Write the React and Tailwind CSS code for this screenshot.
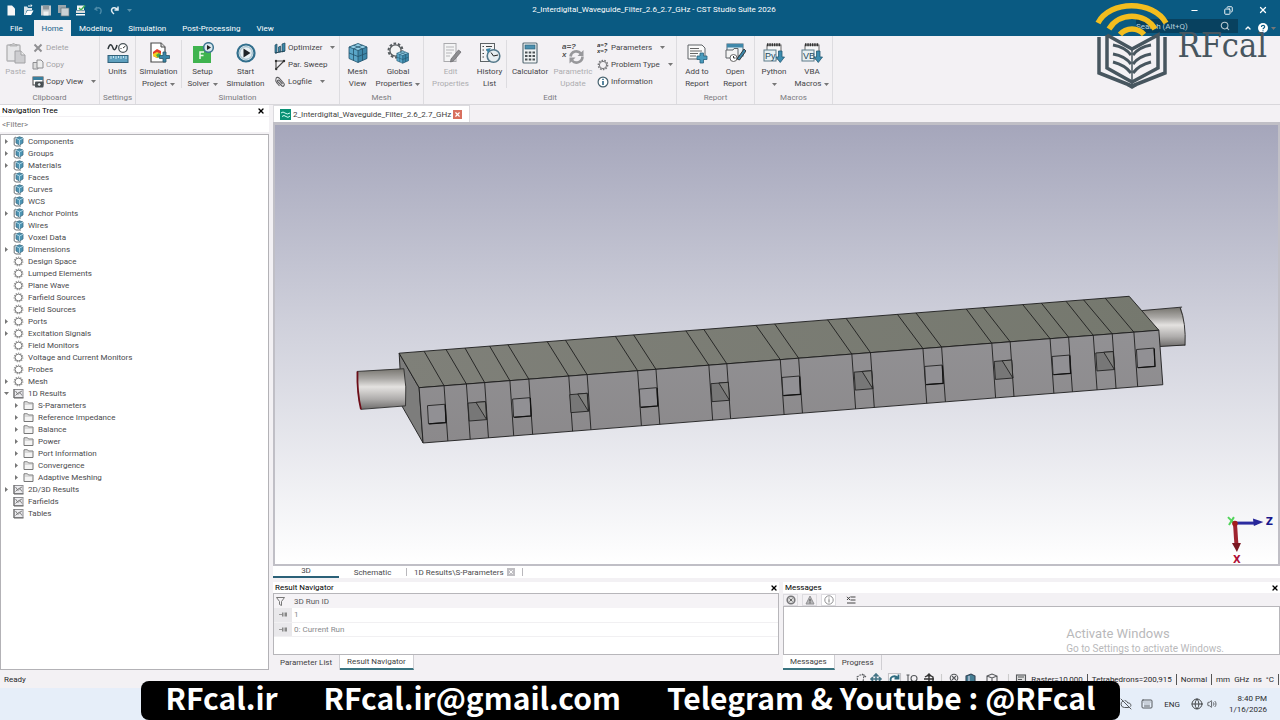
import React, { useState } from 'react';
import { CloudOff, Keyboard, Globe, Volume2, Search, Minus, Copy, X, ChevronUp } from 'lucide-react';

const TREE = [
  { label: 'Components', icon: 'cube', arrow: 'right' },
  { label: 'Groups', icon: 'cube', arrow: 'right' },
  { label: 'Materials', icon: 'cube', arrow: 'right' },
  { label: 'Faces', icon: 'cube' },
  { label: 'Curves', icon: 'cube' },
  { label: 'WCS', icon: 'cube' },
  { label: 'Anchor Points', icon: 'cube', arrow: 'right' },
  { label: 'Wires', icon: 'cube' },
  { label: 'Voxel Data', icon: 'cube' },
  { label: 'Dimensions', icon: 'cube', arrow: 'right' },
  { label: 'Design Space', icon: 'gear' },
  { label: 'Lumped Elements', icon: 'gear' },
  { label: 'Plane Wave', icon: 'gear' },
  { label: 'Farfield Sources', icon: 'gear' },
  { label: 'Field Sources', icon: 'gear' },
  { label: 'Ports', icon: 'gear', arrow: 'right' },
  { label: 'Excitation Signals', icon: 'gear', arrow: 'right' },
  { label: 'Field Monitors', icon: 'gear' },
  { label: 'Voltage and Current Monitors', icon: 'gear' },
  { label: 'Probes', icon: 'gear' },
  { label: 'Mesh', icon: 'gear', arrow: 'right' },
  { label: '1D Results', icon: 'plot', arrow: 'down' },
  { label: 'S-Parameters', icon: 'folder', arrow: 'right', child: true },
  { label: 'Reference Impedance', icon: 'folder', arrow: 'right', child: true },
  { label: 'Balance', icon: 'folder', arrow: 'right', child: true },
  { label: 'Power', icon: 'folder', arrow: 'right', child: true },
  { label: 'Port Information', icon: 'folder', arrow: 'right', child: true },
  { label: 'Convergence', icon: 'folder', arrow: 'right', child: true },
  { label: 'Adaptive Meshing', icon: 'folder', arrow: 'right', child: true },
  { label: '2D/3D Results', icon: 'plot', arrow: 'right' },
  { label: 'Farfields', icon: 'plot' },
  { label: 'Tables', icon: 'plot' },
];

const MENU = ['File', 'Home', 'Modeling', 'Simulation', 'Post-Processing', 'View'];

// ---------- icons ----------

const TreeIcon = ({ type }) => (
  <svg className="w-[11px] h-[11px] shrink-0" viewBox="0 0 11 11" fill="none">
    {type === 'cube' && (
      <>
        <path d="M3 1L1.2 2V9L3 10H8" stroke="#6b7276" strokeWidth="1" />
        <path d="M3 2L6.5 .8L10 2V7L6.5 9L3 7Z" fill="#4d94b3" stroke="#3c6a80" strokeWidth=".8" />
        <path d="M3 2.3L6.5 4L10 2.3M6.5 4V9" stroke="#bfe0ee" strokeWidth=".8" />
      </>
    )}
    {type === 'gear' && (
      <>
        <circle cx="5.5" cy="5.5" r="4.3" stroke="#9a9a9a" strokeWidth="1.2" strokeDasharray="1.3 1.1" />
        <circle cx="5.5" cy="5.5" r="3.4" stroke="#7d7d7d" strokeWidth="1" />
      </>
    )}
    {type === 'plot' && (
      <>
        <rect x="1" y="1.5" width="9" height="8" fill="#ececef" stroke="#8d8d91" />
        <path d="M1 1V10H10.5" stroke="#666" />
        <path d="M2.5 3L5 6.5L7 4.5L9 7.5M2.5 7.5L5 5L9 3" stroke="#777" strokeWidth=".9" />
      </>
    )}
    {type === 'folder' && (
      <>
        <path d="M1 9.5V1.8H4.5L5.5 3H10V9.5Z" fill="#f4f4f4" stroke="#777" />
        <path d="M1.5 4H9.5" stroke="#aaa" strokeWidth=".7" />
      </>
    )}
  </svg>
);

const Arrow = ({ dir }) => (
  <svg className="w-[5px] h-[5px]" viewBox="0 0 5 5" fill="#777">
    {dir === 'right' ? <path d="M1 0L4 2.5L1 5Z" /> : <path d="M0 1H5L2.5 4Z" />}
  </svg>
);

const Big = ({ children }) => (
  <svg className="w-[22px] h-[22px]" viewBox="0 0 22 22" fill="none">{children}</svg>
);

const PasteIcon = () => (
  <Big>
    <rect x="2" y="3" width="13" height="16" rx="1" fill="#e6e6e8" stroke="#b4b4b6" strokeWidth="1.4" />
    <path d="M5 4V2.5H7L8.5 1L10 2.5H12V4Z" fill="#c6c6c8" stroke="#aaa" strokeWidth=".8" />
    <path d="M10 9H16L20 13V21H10Z" fill="#cdcdd0" stroke="#a2a2a5" />
    <path d="M16 9V13H20" fill="#eee" stroke="#a2a2a5" />
  </Big>
);

const UnitsIcon = () => (
  <Big>
    <path d="M1 7C3 0 5 3 6 6S9 8 10 3" stroke="#30383c" strokeWidth="1.5" />
    <circle cx="16" cy="6" r="4.3" fill="#fff" stroke="#4c555a" strokeWidth="1.3" />
    <path d="M16 6L18.5 4M13.5 6.5H14.5" stroke="#333" />
    <rect x="1" y="13.5" width="20" height="7" fill="#5d9fbe" stroke="#31617a" />
    <path d="M4 14V17M6.5 14V16M9 14V17M11.5 14V16M14 14V17M16.5 14V16M19 14V17" stroke="#d8edf5" strokeWidth=".9" />
  </Big>
);

const ProjectIcon = () => (
  <Big>
    <path d="M3 1H13L17 5V20H3Z" fill="#fff" stroke="#4b4b4b" strokeWidth="1.2" />
    <path d="M13 1V5H17" stroke="#4b4b4b" fill="#ddd" />
    <path d="M5 10L9 7L13 9V14L9 16L5 14Z" fill="#e33b2a" />
    <path d="M5 12L9 10L13 12V14L9 16L5 14Z" fill="#f2d024" />
    <path d="M8 13L11 11L13 13L10 16Z" fill="#3faa4d" />
    <path d="M15 10H18V13.5H21.5V16.5H18V20H15V16.5H11.5V13.5H15Z" fill="#3b86a8" stroke="#27556b" strokeWidth=".8" />
  </Big>
);

const SolverIcon = () => (
  <Big>
    <rect x="1" y="4" width="18" height="17" fill="#3fb34f" />
    <path d="M8 17V10H12M8 13.5H11.5" stroke="#eafbe9" strokeWidth="1.5" />
    <circle cx="16.5" cy="5.5" r="4.8" fill="#d9e7ee" stroke="#3d7591" strokeWidth="1.5" />
    <path d="M15 3V8L19 5.5Z" fill="#222" />
  </Big>
);

const StartIcon = () => (
  <Big>
    <circle cx="11" cy="11" r="8.5" fill="#e9f0f3" stroke="#326f8d" strokeWidth="2.2" />
    <circle cx="11" cy="11" r="6.3" stroke="#8fb3c4" strokeWidth="1" />
    <path d="M8.5 6.5V15.5L15.5 11Z" fill="#1f2326" />
  </Big>
);

const CubeShape = () => (
  <>
    <path d="M2 5L11 1.5L20 5V16.5L11 20.5L2 16.5Z" fill="#5aa6c8" />
    <path d="M2 5L11 1.5L20 5L11 8.5Z" fill="#93cfe7" />
    <path d="M11 8.5L20 5V16.5L11 20.5Z" fill="#3d87a9" />
    <path d="M2 5L11 8.5L20 5M11 8.5V20.5M2 11L11 14.5L20 11M6.5 3.2L15.5 6.8V18.5M15.5 3.2L6.5 6.8V18.5M2 5L11 1.5L20 5V16.5L11 20.5L2 16.5Z" stroke="#235269" strokeWidth=".8" />
  </>
);

const MeshIcon = () => <Big><CubeShape /></Big>;

const GlobalIcon = () => (
  <Big>
    <circle cx="8.5" cy="8.5" r="7" stroke="#555b5e" strokeWidth="2" strokeDasharray="2.6 1.8" />
    <circle cx="8.5" cy="8.5" r="5.6" fill="#f3f3f4" stroke="#555b5e" strokeWidth="1.3" />
    <g transform="translate(8.5 8) scale(.65)"><CubeShape /></g>
  </Big>
);

const EditIcon = () => (
  <Big>
    <rect x="4" y="1.5" width="12" height="18" fill="#f4f4f5" stroke="#aaaaad" />
    <path d="M6 5H14M6 8H14M6 11H12M6 14H10" stroke="#b5b5b8" />
    <path d="M11 17L18.5 8L21 10L13.5 19L10.5 20Z" fill="#8d8d90" stroke="#6f6f72" strokeWidth=".8" />
  </Big>
);

const HistoryIcon = () => (
  <Big>
    <rect x="1.5" y="1.5" width="14" height="18" fill="#f4f4f5" stroke="#5e6366" />
    <path d="M3.5 4.5H5M7 4.5H13M3.5 8H5M7 8H11M3.5 11.5H5M3.5 15H5" stroke="#444" strokeWidth="1.2" />
    <circle cx="14.5" cy="14" r="6.3" fill="#e7eef1" stroke="#54788a" strokeWidth="1.6" />
    <path d="M14.5 14L12 10.5M14.5 14L19 13" stroke="#222" />
    <path d="M7 7L12 6L9 11Z" fill="#3a87aa" />
  </Big>
);

const CalculatorIcon = () => (
  <Big>
    <rect x="4" y="1" width="14" height="20" rx="1" fill="#f2f4f5" stroke="#5b6e78" strokeWidth="1.2" />
    <rect x="6" y="3" width="10" height="4" fill="#4b90b0" stroke="#2f6179" strokeWidth=".7" />
    <path d="M6 10.5H16M6 14H16M6 17.5H16" stroke="#4d5357" strokeWidth="2.2" strokeDasharray="2.5 1.25" />
  </Big>
);

const ParametricIcon = () => (
  <Big>
    <text x="0" y="7" className="text-[8px] italic font-bold font-['Liberation_Sans',sans-serif]" fill="#555">a=?</text>
    <text x="0" y="15" className="text-[8px] italic font-bold font-['Liberation_Sans',sans-serif]" fill="#555">x</text>
    <path d="M8.5 14.5A6 6 0 0 1 19 11.5M20.5 14.5A6 6 0 0 1 10 18.5" stroke="#98989b" strokeWidth="2.6" />
    <path d="M21.5 8V14H15.5ZM7.5 21.5V15.5H13.5Z" fill="#98989b" />
  </Big>
);

const AddReportIcon = () => (
  <Big>
    <path d="M2 3H16L19 6V17H2Z" fill="#fafafa" stroke="#5e6366" />
    <path d="M4 6.5H13M4 9H16M4 11.5H12M4 14H10" stroke="#666" />
    <path d="M14 11H17.5V14H21V17.5H17.5V21H14V17.5H11V14H14Z" fill="#4a9bbd" stroke="#2a637f" strokeWidth=".8" />
  </Big>
);

const OpenReportIcon = () => (
  <Big>
    <rect x="3" y="2" width="16" height="12" fill="#e8f1f5" stroke="#476577" />
    <rect x="3" y="2" width="16" height="3.5" fill="#3f88aa" />
    <path d="M2 8H9L10 6.5H14V16H2Z" fill="#f4f4f4" stroke="#5e6366" />
    <circle cx="9.5" cy="16" r="3.5" fill="#fff" stroke="#666" />
    <path d="M9.5 16V14M9.5 16H11.5" stroke="#333" />
    <path d="M13 17L20 7L22 9L15.5 18Z" fill="#3f88aa" stroke="#222" strokeWidth=".8" />
  </Big>
);

const MacroIcon = ({ text }) => (
  <Big>
    <rect x="4" y="3" width="14" height="14" fill="#f6f6f7" stroke="#666" />
    <path d="M4 2.8H18" stroke="#333" strokeWidth="3" strokeDasharray="1.5 .8" />
    <rect x="1" y="8" width="12" height="11" fill="#e7f0f3" stroke="#5f7d8a" />
    <text x="2" y="17" className="text-[9px] font-['Liberation_Sans',sans-serif]" fill="#25495b">{text}</text>
    <path d="M15.5 9H19V15H21.5L17.25 20.5L13 15H15.5Z" fill="#3d8db0" stroke="#245a74" strokeWidth=".8" />
  </Big>
);

const Small = ({ children }) => (
  <svg className="w-3 h-3 shrink-0" viewBox="0 0 12 12" fill="none">{children}</svg>
);

const DeleteIcon = () => <Small><path d="M2.5 2.5L9.5 9.5M9.5 2.5L2.5 9.5" stroke="#909093" strokeWidth="2" /></Small>;
const CopyIcon = () => (
  <Small>
    <path d="M1 3.5H6V10H1Z" fill="#ddd" stroke="#8d8d90" />
    <path d="M5 1H9L11 3V9H5Z" fill="#eee" stroke="#8d8d90" />
  </Small>
);
const CopyViewIcon = () => (
  <Small>
    <rect x="1" y="1" width="10" height="8" fill="#fff" stroke="#444" />
    <rect x="1" y="1" width="10" height="3" fill="#397f9f" />
    <rect x="3" y="5.5" width="8.5" height="6" rx="1" fill="#4b5357" />
    <circle cx="7.2" cy="8.5" r="1.8" fill="#dfe8ec" stroke="#222" strokeWidth=".6" />
  </Small>
);
const OptimizerIcon = () => (
  <Small>
    <path d="M1 3L3 2V11H1ZM4.5 5L6.5 4V10H4.5ZM8 2L11 1V9L8 10Z" fill="#3d87a8" stroke="#23495b" strokeWidth=".7" />
    <path d="M1 11L11 9" stroke="#23495b" />
  </Small>
);
const SweepIcon = () => (
  <Small>
    <path d="M2 10V2H10L3 9" stroke="#444" strokeWidth="1.1" />
    <circle cx="2" cy="2" r="1.2" fill="#333" /><circle cx="10" cy="2" r="1.2" fill="#333" /><circle cx="2.2" cy="10" r="1.2" fill="#333" />
  </Small>
);
const LogIcon = () => (
  <Small>
    <path d="M2 3C2 1 4 1 5 2L10 7.5C11 9 9.5 11 8 10L3.5 5.5C3 4.5 4.5 3.5 5.2 4.5L8.5 8M2 3C1 5 2 6 3 7L5.5 10" stroke="#5c5c5f" strokeWidth="1.1" />
  </Small>
);
const ParamIcon = () => (
  <Small>
    <text x="0" y="5" className="text-[6px] italic font-bold font-['Liberation_Sans',sans-serif]" fill="#333">a=?</text>
    <text x="0" y="11" className="text-[6px] italic font-bold font-['Liberation_Sans',sans-serif]" fill="#333">x=?</text>
  </Small>
);
const GearSmall = () => (
  <Small>
    <circle cx="6" cy="6" r="4.6" stroke="#77777a" strokeWidth="1.5" strokeDasharray="1.6 1.2" />
    <circle cx="6" cy="6" r="3.6" stroke="#77777a" />
  </Small>
);
const InfoIcon = () => (
  <Small>
    <circle cx="6" cy="6" r="4.9" fill="#fff" stroke="#47626f" strokeWidth="1.2" />
    <path d="M6 5V9M6 2.8V4" stroke="#205f80" strokeWidth="1.5" />
  </Small>
);

// ---------- ribbon ----------

const Drop = ({ className = '' }) => (
  <svg className={`inline-block w-[5px] h-[3px] ${className}`} viewBox="0 0 5 3" fill="#777"><path d="M0 0H5L2.5 3Z" /></svg>
);

const BigButton = ({ icon, lines, drop, disabled, width }) => (
  <button disabled={disabled} className={`${width} shrink-0 flex flex-col items-center pt-[6px] text-center leading-3 whitespace-nowrap ${disabled ? 'text-[#adadb0]' : 'text-[#454548]'}`}>
    {icon}
    <span className="pt-[2px]">{lines[0]}</span>
    <span className="flex items-center h-3">
      {lines[1]}
      {drop && <Drop className={lines[1] ? 'ml-[3px]' : ''} />}
    </span>
  </button>
);

const SmallButton = ({ icon, label, drop, disabled }) => (
  <button disabled={disabled} className={`flex items-center gap-[2px] h-[17px] whitespace-nowrap ${disabled ? 'text-[#a3a3a6]' : 'text-[#454548]'}`}>
    {icon}
    <span>{label}</span>
    {drop && <Drop className="ml-[6px]" />}
  </button>
);

const Group = ({ name, width, children }) => (
  <section className={`${width} shrink-0 flex flex-col border-r border-[#dddce0]`}>
    <div className="flex h-[56px]">{children}</div>
    <div className="text-center leading-[13px] text-[#7b7b80]">{name}</div>
  </section>
);

const Divider = () => <div className="w-px h-[48px] mt-1 bg-[#dddce0] shrink-0" />;

const Ribbon = () => (
  <div className="flex h-[69px] bg-[#f3f1f4] border-b border-[#d8d7db] overflow-hidden">
    <Group name="Clipboard" width="w-[100px]">
      <BigButton icon={<PasteIcon />} lines={['Paste', '']} width="w-[31px]" disabled />
      <div className="flex flex-col pt-[3px] pl-px">
        <SmallButton icon={<DeleteIcon />} label="Delete" disabled />
        <SmallButton icon={<CopyIcon />} label="Copy" disabled />
        <SmallButton icon={<CopyViewIcon />} label="Copy View" drop />
      </div>
    </Group>
    <Group name="Settings" width="w-[36px]">
      <BigButton icon={<UnitsIcon />} lines={['Units', '']} width="w-[35px]" />
    </Group>
    <Group name="Simulation" width="w-[204px]">
      <BigButton icon={<ProjectIcon />} lines={['Simulation', 'Project']} drop width="w-[45px]" />
      <Divider />
      <BigButton icon={<SolverIcon />} lines={['Setup', 'Solver']} drop width="w-[41px]" />
      <BigButton icon={<StartIcon />} lines={['Start', 'Simulation']} width="w-[45px]" />
      <div className="flex flex-col pt-[3px] pl-[6px]">
        <SmallButton icon={<OptimizerIcon />} label="Optimizer" drop />
        <SmallButton icon={<SweepIcon />} label="Par. Sweep" />
        <SmallButton icon={<LogIcon />} label="Logfile" drop />
      </div>
    </Group>
    <Group name="Mesh" width="w-[84px]">
      <BigButton icon={<MeshIcon />} lines={['Mesh', 'View']} width="w-[35px]" />
      <BigButton icon={<GlobalIcon />} lines={['Global', 'Properties']} drop width="w-[46px]" />
    </Group>
    <Group name="Edit" width="w-[253px]">
      <div className="w-1" />
      <BigButton icon={<EditIcon />} lines={['Edit', 'Properties']} width="w-[45px]" disabled />
      <BigButton icon={<HistoryIcon />} lines={['History', 'List']} width="w-[33px]" />
      <Divider />
      <BigButton icon={<CalculatorIcon />} lines={['Calculator', '']} width="w-[46px]" />
      <BigButton icon={<ParametricIcon />} lines={['Parametric', 'Update']} width="w-[40px]" disabled />
      <div className="flex flex-col pt-[3px] pl-1">
        <SmallButton icon={<ParamIcon />} label="Parameters" drop />
        <SmallButton icon={<GearSmall />} label="Problem Type" drop />
        <SmallButton icon={<InfoIcon />} label="Information" />
      </div>
    </Group>
    <Group name="Report" width="w-[78px]">
      <BigButton icon={<AddReportIcon />} lines={['Add to', 'Report']} width="w-[40px]" />
      <BigButton icon={<OpenReportIcon />} lines={['Open', 'Report']} width="w-[36px]" />
    </Group>
    <Group name="Macros" width="w-[78px]">
      <BigButton icon={<MacroIcon text="Py" />} lines={['Python', '']} drop width="w-[38px]" />
      <BigButton icon={<MacroIcon text="VB" />} lines={['VBA', 'Macros']} drop width="w-[38px]" />
    </Group>
  </div>
);

const TitleBar = () => (
  <header className="bg-[#0a5a82] text-white">
    <div className="grid grid-cols-[1fr_auto_1fr] items-center h-5">
      <svg className="w-[136px] h-[18px]" viewBox="0 0 136 18" fill="none">
        <path d="M7.5 4.5H12L15 7.5V14.5H7.5Z" fill="#f7f7f7" />
        <path d="M24 14V5.5H27L28 7H32V9H27L25 14Z" fill="#d8e4ea" />
        <path d="M25 14L27.5 9.5H33.5L31 14Z" fill="#fff" />
        <path d="M28 5H32L31 3.5" stroke="#fff" />
        <rect x="41" y="4.5" width="10" height="10" fill="#c5cbcf" />
        <rect x="43" y="4.5" width="6" height="4" fill="#8e979c" /><rect x="43.5" y="10.5" width="5" height="4" fill="#eef1f2" />
        <rect x="58" y="4" width="8" height="8" fill="#9aa5ab" /><rect x="61" y="7" width="8" height="8" fill="#cbd1d4" stroke="#65747c" strokeWidth=".7" />
        <path d="M77 4.5H84V9H77Z" fill="#f5f5f5" /><path d="M79 7L81 9L85 4.5" stroke="#3fae55" strokeWidth="1.5" />
        <path d="M76 9.5H85V12H76Z" fill="#ddd" /><path d="M76 13H85V14.5H76Z" fill="#fff" />
        <path d="M97 6L95 8L97.5 9.5M95.5 8C99 5 103 8 100 13" stroke="#4c8aa8" strokeWidth="1.4" />
        <path d="M118 5.5V9H114.5M117.5 8.5C113 4 109 9 114 13" stroke="#e3edf2" strokeWidth="1.5" />
        <path d="M127 8H132L129.5 11Z" fill="#5790aa" />
      </svg>
      <h1 className="pl-7 leading-5 whitespace-nowrap">2_Interdigital_Waveguide_Filter_2.6_2.7_GHz - CST Studio Suite 2026</h1>
      <div className="flex justify-end gap-[25px] pr-3">
        <button aria-label="Minimize"><Minus className="w-[9px] h-[9px]" strokeWidth={3} /></button>
        <button aria-label="Restore"><Copy className="w-[9px] h-[9px] -scale-x-100" strokeWidth={2.5} /></button>
        <button aria-label="Close"><X className="w-[10px] h-[10px]" strokeWidth={3} /></button>
      </div>
    </div>
    <nav className="flex items-stretch h-4 pl-[2px]">
      {MENU.map((m) => (
        <button key={m} className={m === 'Home' ? 'bg-[#f3f1f4] text-[#17618a] px-2 ml-[3px]' : 'px-2'}>
          {m}
        </button>
      ))}
      <div className="ml-auto mb-1 -mt-px flex items-center bg-[#08415f] w-[102px] h-[14px]">
        <input aria-label="Search" placeholder="Search (Alt+Q)" className="w-[80px] bg-transparent placeholder:text-[#bad0dc] outline-none" />
        <Search className="w-[10px] h-[10px] ml-1 text-[#b9c9d1]" strokeWidth={2.5} />
      </div>
      <button aria-label="Collapse ribbon" className="px-[6px]"><ChevronUp className="w-[8px] h-[8px]" strokeWidth={4} /></button>
      <button aria-label="Help" className="pr-1 flex items-center gap-[3px]">
        <svg className="w-[10px] h-[10px]" viewBox="0 0 10 10" fill="none">
          <circle cx="5" cy="5" r="5" fill="#fff" />
          <path d="M3.4 4C3.4 1.800 6.800 1.800 6.700 3.900C6.600 5 5 5 5 6.300M5 7.300V8.300" stroke="#0a5a82" strokeWidth="1.1" />
        </svg>
        <Drop />
      </button>
    </nav>
  </header>
);

const BookLogo = () => (
  <div className="absolute right-[13px] top-0 flex items-start pointer-events-none">
    <svg className="w-[76px] h-[92px]" viewBox="0 0 76 92" fill="none">
      <g stroke="#f3bd1e" strokeWidth="5.5">
        <path d="M4 23C16 0 59 0 72 23" />
        <path d="M15 29C25 12 51 12 61 29" />
        <path d="M26 34.5C32 27 44 27 50 34.5" />
      </g>
      <g stroke="#47565f" strokeWidth="3.5">
        <path d="M5 37V73L38 86L71 73V37" />
        <path d="M13 35V68L38 82L64 68V35L38 49L13 35" />
        <path d="M38 49V84" strokeWidth="1.5" />
      </g>
      <path d="M19 45Q31 47 37 55M19 54Q31 56 37 64M19 62Q31 65 37 73M57 45Q45 47 39 55M57 54Q45 56 39 64M57 62Q45 65 39 73" stroke="#47565f" strokeWidth="3" />
      <path d="M33 86H43L38 89Z" fill="#47565f" />
    </svg>
    <span className="pt-[26px] pl-2 text-[34px] leading-[38px] text-[#47565f] font-['DejaVu_Serif_Condensed','DejaVu_Serif',serif]">RFcal</span>
  </div>
);

// ---------- left panel ----------

const NavigationTree = () => (
  <aside className="w-[269px] shrink-0 flex flex-col">
    <div className="flex items-center justify-between h-[11px] pl-[2px] pr-1 bg-white text-black">
      <h2>Navigation Tree</h2>
      <button aria-label="Close navigation tree"><X className="w-2 h-2" strokeWidth={4} /></button>
    </div>
    <input aria-label="Filter" placeholder="<Filter>" className="h-[15px] mt-px mb-[2px] px-[2px] bg-white placeholder:text-[#77777a] outline-none" />
    <ul className="flex-1 bg-white border border-[#b3b2b6] text-[#4a4a4d]">
      {TREE.map((item) => (
        <li key={item.label} className={`flex items-center h-3 ${item.child ? 'pl-[13px]' : 'pl-[3px]'}`}>
          {item.arrow ? (
            <button aria-label={item.label} className="w-[9px] flex shrink-0"><Arrow dir={item.arrow} /></button>
          ) : (
            <span className="w-[9px] shrink-0" />
          )}
          <TreeIcon type={item.icon} />
          <span className="pl-[4px]">{item.label}</span>
        </li>
      ))}
    </ul>
  </aside>
);

// ---------- 3D view ----------

const FRONT = [443.3, 465.7, 484, 509.3, 528.3, 568.3, 586.7, 637.3, 655.7, 708.7, 726.7, 780.3, 798.7, 852, 870.7, 923.3, 942, 992.3, 1010.7, 1050.7, 1069.3, 1094, 1113, 1134.7];
const BACK = [423.3, 445.3, 464.3, 489, 507.3, 546.7, 565, 615, 633.3, 685.7, 703.7, 756, 774.7, 827.7, 846.3, 897.7, 916.3, 966.7, 984, 1023.3, 1042, 1066.7, 1084.3, 1106];
const SCREWS = [[426.7, 405.3], [512, 398.7], [639, 388.7], [782, 377], [925, 366], [1052.7, 356], [1137.3, 349]];
const OPENINGS = [[467.3, 402.7], [569.3, 394.3], [710.7, 383.3], [854.3, 371.7], [994.7, 361], [1096.5, 352.5]];

const frontY = (x) => 387.3 - (x - 418.3) * 0.0777;
const bottomY = (x) => 442.7 - (x - 422.3) * 0.0788;
const backY = (x) => 352.7 - (x - 398.3) * 0.0779;

const Model = () => (
  <svg className="absolute inset-0 w-full h-full" viewBox="275 124 1003 440" fill="none">
    <defs>
      <linearGradient id="tube" x1="0" y1="0" x2="0" y2="1">
        <stop offset="0" stopColor="#77756f" />
        <stop offset=".25" stopColor="#aaa8a5" />
        <stop offset=".45" stopColor="#e4e2e0" />
        <stop offset=".75" stopColor="#aeacab" />
        <stop offset="1" stopColor="#6f6d6c" />
      </linearGradient>
      <linearGradient id="lid" x1="0" y1="0" x2="1" y2="0">
        <stop offset="0" stopColor="#7f8079" />
        <stop offset="1" stopColor="#75786e" />
      </linearGradient>
      <linearGradient id="side" x1="0" y1="0" x2="0" y2="1">
        <stop offset="0" stopColor="#929194" />
        <stop offset="1" stopColor="#8b898b" />
      </linearGradient>
    </defs>
    <path d="M1143 310L1181.7 307Q1187 320 1186 345L1161 346Z" fill="url(#tube)" />
    <path d="M1143 310L1183 306.5M1161 346L1186 344.5M1181 307Q1187 322 1186 345" stroke="#222" strokeWidth=".9" />
    <path d="M398.3 352.7L418.3 387.3L422.3 442.7L401.3 406Z" fill="#7d7d7c" stroke="#1c1c1c" strokeWidth=".9" />
    <path d="M356 371L403 368Q406 386 404.7 405.5L360 409Q355 392 356 371Z" fill="url(#tube)" />
    <path d="M356 371L403 368.3Q406 386 404.7 405.5L360 409" stroke="#2c2c2c" strokeWidth=".9" />
    <path d="M356.5 371Q356 392 360 409" stroke="#6d0d18" strokeWidth="1.8" />
    <path d="M398.3 352.7L1130 295.7L1159.7 329.7L418.3 387.3Z" fill="url(#lid)" stroke="#1c1c1c" strokeWidth=".9" />
    <path d="M418.3 387.3L1159.7 329.7L1163.7 384.3L422.3 442.7Z" fill="url(#side)" stroke="#1c1c1c" strokeWidth=".9" />
    {FRONT.map((x, i) => (
      <path key={x} d={`M${BACK[i]} ${backY(BACK[i])}L${x} ${frontY(x)}L${x + 3.8} ${bottomY(x + 3.8)}`} stroke="#1e1e1e" strokeWidth=".9" />
    ))}
    {SCREWS.map(([x, y]) => (
      <g key={x}>
        <path d={`M${x} ${y}l17.5 -1.4l1 18.2l-17.5 1.4Z`} fill="#919094" stroke="#222" strokeWidth=".9" />
        <path d={`M${x + 17.8} ${y - 1}l.8 18l-17 1.3`} stroke="#111" strokeWidth="1.2" />
      </g>
    ))}
    {OPENINGS.map(([x, y]) => (
      <g key={x}>
        <path d={`M${x} ${y}l17.5 -1.4l1.2 18l-17.5 1.4Z`} fill="#777777" stroke="#222" strokeWidth=".9" />
        <path d={`M${x + 8} ${y - 0.7}l10.7 17.3l-1.2 -18Z`} fill="#80807e" stroke="#222" strokeWidth=".9" />
      </g>
    ))}

    <path d="M1236 523H1258" stroke="#2c2ca0" strokeWidth="3" />
    <path d="M1254 518.5L1264.5 522L1255 526Z" fill="#27279a" />
    <path d="M1236 523L1237.5 545" stroke="#9f2430" strokeWidth="4" />
    <path d="M1233 543H1242L1238 552Z" fill="#7a1822" />
    <path d="M1229 517L1235 523M1235 517L1230 525" stroke="#52d45b" strokeWidth="2" />
    <circle cx="1236" cy="523.5" r="2.8" fill="#a61c1c" />
    <text x="1267" y="525" className="text-[10px] font-bold font-['DejaVu_Sans',sans-serif]" fill="#17178c">Z</text>
    <text x="1234" y="563" className="text-[10px] font-bold font-['DejaVu_Sans',sans-serif]" fill="#b00f36">X</text>
  </svg>
);

const Viewport = () => (
  <>
    <div className="flex h-[17px] text-[#3f3f42]">
      <div className="flex items-center gap-[2px] pl-[6px] pr-[7px] bg-white border-x border-t border-[#dcdbdf]">
        <svg className="w-[11px] h-[11px]" viewBox="0 0 11 11" fill="none">
          <rect width="11" height="11" fill="#0a9175" />
          <path d="M1 4Q3 2 5 4T10 4M2 7.5Q4 5.5 6 7.5T10 7" stroke="#d6fff4" />
        </svg>
        <span>2_Interdigital_Waveguide_Filter_2.6_2.7_GHz</span>
        <button aria-label="Close document" className="w-[9px] h-[9px] bg-[#d8705f] text-white flex items-center justify-center">
          <X className="w-[7px] h-[7px]" strokeWidth={4} />
        </button>
      </div>
    </div>
    <div className="relative flex-1 border-2 border-t-[3px] border-[#c0bfc6] bg-linear-to-b from-[#a5a6bb] via-[#cfd0db] via-45% to-white">
      <Model />
    </div>
  </>
);

const ViewTabs = () => (
  <div className="flex items-center h-[12px] bg-white text-[#4a4a4d] whitespace-nowrap">
    <button className="w-[66px] h-full leading-[10px] border-b-2 border-[#2b6178]">3D</button>
    <button className="w-[67px]">Schematic</button>
    <div className="flex items-center gap-[3px] px-[7px] border-x border-[#b9b8bc] h-2">
      <button>1D Results\S-Parameters</button>
      <button aria-label="Close result view" className="w-2 h-2 bg-[#c0bfc3] text-white flex items-center justify-center"><X className="w-[6px] h-[6px]" strokeWidth={4} /></button>
    </div>
  </div>
);

// ---------- bottom panels ----------

const PanelTitle = ({ children }) => (
  <div className="flex items-center justify-between h-[11px] bg-white text-black pl-[2px] pr-[1px]">
    <h2>{children}</h2>
    <button aria-label={`Close ${children}`}><X className="w-2 h-2" strokeWidth={4} /></button>
  </div>
);

const PanelTabs = ({ tabs, active, onSelect }) => (
  <div className="flex h-[15px] text-[#3f3f42]">
    {tabs.map((t) => (
      <button
        key={t}
        onClick={() => onSelect(t)}
        className={`px-[7px] border-r border-[#d0cfd3] ${t === active ? 'bg-white border-b-2 border-b-[#3a7480] leading-3' : ''}`}
      >
        {t}
      </button>
    ))}
  </div>
);

const RunPin = () => (
  <svg className="w-2 h-[5px] mx-auto" viewBox="0 0 8 5" fill="none"><path d="M0 2.5H3" stroke="#999" /><path d="M3 .5H4.5V4.5H3ZM5.5 .5H8V4.5H5.5Z" fill="#888" /></svg>
);

const ResultNavigator = () => {
  const [tab, setTab] = useState('Result Navigator');
  return (
    <section>
      <PanelTitle>Result Navigator</PanelTitle>
      <div className="h-[62px] bg-white border border-[#b7b6ba]">
        <table className="w-full text-left">
          <thead>
            <tr className="h-[14px] bg-[#f5f3f6] text-[#5a5a5d]">
              <th className="w-[18px]">
                <svg className="w-[9px] h-[9px] ml-[2px]" viewBox="0 0 9 9" fill="none"><path d="M.5 .5H8.5L5.5 4.5V8.5L3.5 7.5V4.5Z" stroke="#777" /></svg>
              </th>
              <th className="font-normal pl-[2px]">3D Run ID</th>
            </tr>
          </thead>
          <tbody className="text-[#8a8a8d]">
            {['1', '0: Current Run'].map((run) => (
              <tr key={run} className="h-[14px] border-b border-[#f1f0f2]">
                <td className="bg-[#e9e8eb]"><RunPin /></td>
                <td className="pl-[2px]">{run}</td>
              </tr>
            ))}
          </tbody>
        </table>
      </div>
      <PanelTabs tabs={['Parameter List', 'Result Navigator']} active={tab} onSelect={setTab} />
    </section>
  );
};

const Messages = () => {
  const [tab, setTab] = useState('Messages');
  return (
    <section>
      <PanelTitle>Messages</PanelTitle>
      <div className="flex items-center h-[13px] gap-1">
        <button aria-label="Errors" className="w-[15px] h-3 border border-[#dddce0] flex justify-center items-center">
          <svg className="w-[10px] h-[10px]" viewBox="0 0 10 10" fill="none"><circle cx="5" cy="5" r="3.8" fill="#ddd" stroke="#77777a" strokeWidth="1.6" /><path d="M3.5 3.5L6.5 6.5M6.5 3.5L3.5 6.5" stroke="#666" /></svg>
        </button>
        <button aria-label="Warnings" className="w-[15px] h-3 border border-[#dddce0] flex justify-center items-center">
          <svg className="w-[10px] h-[10px]" viewBox="0 0 10 10" fill="none"><path d="M5 1L9 9H1Z" fill="#b8b8ba" stroke="#909093" /><path d="M5 4V6.5M5 7.3V8.3" stroke="#444" /></svg>
        </button>
        <button aria-label="Information" className="w-[15px] h-3 bg-white border border-[#dddce0] flex justify-center items-center">
          <svg className="w-[10px] h-[10px]" viewBox="0 0 10 10" fill="none"><circle cx="5" cy="5" r="4.2" stroke="#909093" /><path d="M5 4.2V7.5M5 2.5V3.5" stroke="#777" /></svg>
        </button>
        <button aria-label="Clear messages" className="ml-[6px]">
          <svg className="w-[10px] h-[8px]" viewBox="0 0 10 8" fill="none"><path d="M1 .8L4 4M4 .8L1 4M4.5 1H9.5M4.5 4H9.5M1 7H9.5" stroke="#444" /></svg>
        </button>
      </div>
      <div className="relative h-[49px] bg-white border border-[#b7b6ba]">
        <div className="absolute right-[55px] bottom-[-1px] text-[#b9b9bb] whitespace-nowrap">
          <p className="text-[13px] leading-4">Activate Windows</p>
          <p className="text-[10px] leading-[13px]">Go to Settings to activate Windows.</p>
        </div>
      </div>
      <PanelTabs tabs={['Messages', 'Progress']} active={tab} onSelect={setTab} />
    </section>
  );
};

const StatusIcons = () => (
  <svg className="w-[172px] h-[12px]" viewBox="0 0 172 12" fill="none" stroke="#55585b" strokeWidth="1.1">
    <path d="M3 10L2 4L5 2H9L8 9L3 10M7 1L11 4" strokeDasharray="2 1" />
    <path d="M16 6H26M21 1V11M18.5 3.5L21 1L23.5 3.5M18 4L16 6L18 8M24 4L26 6L24 8" stroke="#447485" strokeWidth="1.6" />
    <rect x="33.5" y=".5" width="12" height="11" fill="#fafafa" stroke="#c4c3c7" />
    <path d="M36 9C34 3 40 2 43 5M43.5 1.5V5.5H39.5" stroke="#2f6c80" strokeWidth="1.8" />
    <path d="M53 2V10M51.5 2H54.5M51.5 10H54.5" /><circle cx="59" cy="5.5" r="3" />
    <path d="M69 6H79M74 1V11M72 3L74 1L76 3M70 4Q74 1 78 4V8" stroke="#333" strokeWidth="1.4" />
    <path d="M86.5 1V11" stroke="#ccc" />
    <circle cx="99" cy="5" r="3.8" /><path d="M97 3L101 7M101 3L97 7M96 9L94 11" />
    <path d="M111 3L116 1L120 3V10H111Z" fill="#457e94" stroke="#345" /><path d="M114 3V10" stroke="#dde" />
    <path d="M132 3L137 1L142 3V9L137 11L132 9ZM132 3L137 5L142 3M137 5V11" />
    <path d="M153.5 1V11" stroke="#ccc" />
    <rect x="161.5" y="2" width="9" height="7" fill="#ddd" /><path d="M163 4H169M163 6.5H167M167 9L171 11" />
  </svg>
);

const StatusBar = () => (
  <footer className="flex items-center h-[18px] pl-1 pr-px text-[#28282a] whitespace-nowrap">
    <span>Ready</span>
    <div className="ml-auto flex items-center">
      <StatusIcons />
      <span className="px-1 border-r border-[#555]">Raster=10,000</span>
      <span className="px-1 border-r border-[#555]">Tetrahedrons=200,915</span>
      <span className="px-1 border-r border-[#555]">Normal</span>
      <span className="flex gap-1 px-1 border-r border-[#555]"><span>mm</span><span>GHz</span><span>ns</span><span>°C</span></span>
    </div>
  </footer>
);

const Taskbar = () => (
  <div className="flex items-center justify-end h-8 pr-[13px] bg-[#e6eef9] text-[#2c2c2f]">
    <CloudOff className="w-3 h-3 text-[#55585c]" />
    <Keyboard className="w-3 h-3 ml-[9px] text-[#55585c]" />
    <span className="ml-[11px]">ENG</span>
    <Globe className="w-3 h-3 ml-[11px] text-[#44474a]" />
    <Volume2 className="w-[10px] h-[10px] ml-1 text-[#44474a]" />
    <time className="ml-[12px] text-right leading-[11px]">8:40 PM<br />1/16/2026</time>
  </div>
);

const ContactBanner = () => (
  <div className="absolute inset-x-0 bottom-0 flex justify-center pr-[19px] pointer-events-none">
    <div className="flex gap-[46px] px-[25px] h-[39px] rounded-lg bg-black text-white font-bold text-[30px] leading-[33px] whitespace-nowrap font-['Noto_Sans_CJK_SC',sans-serif]">
      <span>RFcal.ir</span>
      <span>RFcal.ir@gmail.com</span>
      <span>Telegram &amp; Youtube : @RFcal</span>
    </div>
  </div>
);

const App = () => (
  <div className="relative min-h-screen flex flex-col bg-[#f3f1f4] overflow-hidden font-[Roboto,sans-serif] text-[8px] leading-[11px]">
    <TitleBar />
    <Ribbon />
    <div className="flex-1 flex gap-1">
      <NavigationTree />
      <main className="flex-1 flex flex-col min-w-0">
        <Viewport />
        <ViewTabs />
        <div className="grid grid-cols-[506fr_497fr] gap-1 pt-1">
          <ResultNavigator />
          <Messages />
        </div>
      </main>
    </div>
    <StatusBar />
    <Taskbar />
    <BookLogo />
    <ContactBanner />
  </div>
);

export default App;
